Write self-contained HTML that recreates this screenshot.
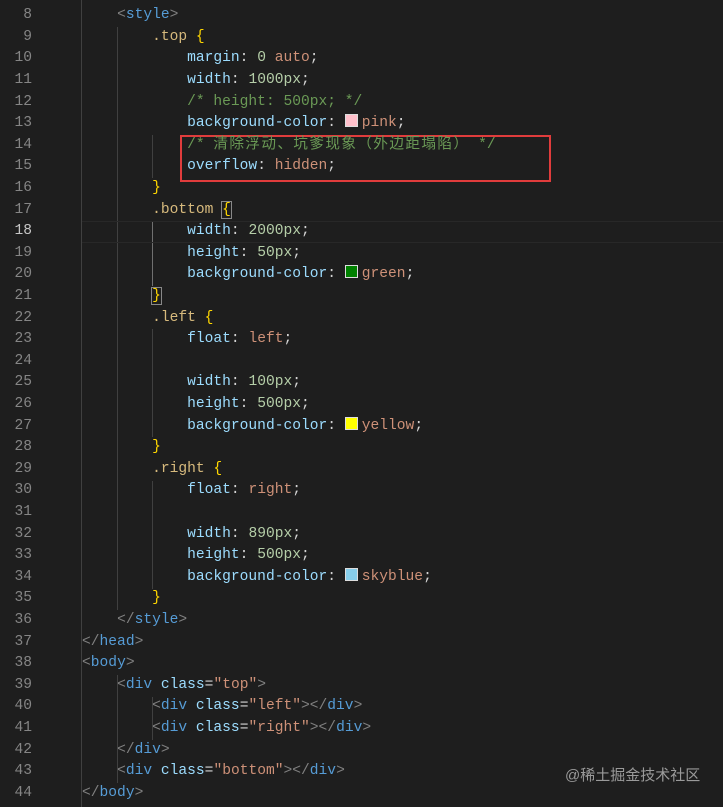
<!DOCTYPE html>
<html><head><meta charset="utf-8"><style>
body{margin:0;width:723px;height:807px;background:#1e1e1e;overflow:hidden;position:relative;font-family:"Liberation Mono","Noto Sans CJK SC",monospace;font-size:14.6px}
.l{position:absolute;left:0;height:21.6px;line-height:21.6px;white-space:pre;width:723px}
.n{position:absolute;width:32px;text-align:right;color:#858585}
.c{position:absolute;left:47px;color:#d4d4d4}
.t{color:#808080}.g{color:#569cd6}.a{color:#9cdcfe}.s{color:#ce9178}.sel{color:#d7ba7d}.b{color:#ffd700}.p{color:#9cdcfe}.num{color:#b5cea8}.cm{color:#6a9955}
.sw{display:inline-block;width:11px;height:11px;border:1px solid #ddd;margin-right:4px;vertical-align:-1px}
.guide{position:absolute;width:1px;background:#404040}
</style></head><body>
<div style="position:absolute;left:81px;top:0;width:1px;height:807px;background:#404040"></div>
<div class="guide" style="left:117px;top:27px;height:583px"></div>
<div class="guide" style="left:152px;top:135px;height:43px"></div>
<div class="guide" style="left:152px;top:221px;height:65px;background:#707070"></div>
<div class="guide" style="left:152px;top:329px;height:108px"></div>
<div class="guide" style="left:152px;top:481px;height:108px"></div>
<div class="guide" style="left:117px;top:675px;height:108px"></div>
<div class="guide" style="left:152px;top:697px;height:43px"></div>
<div style="position:absolute;left:82px;top:221px;width:641px;height:20px;border-top:1px solid #282828;border-bottom:1px solid #282828"></div>
<div style="position:absolute;left:180px;top:135px;width:367px;height:43px;border:2px solid #e03c3c"></div>
<div id="code"></div>
<div style="position:absolute;left:565px;top:764px;color:#9a9a9a;font-family:'Liberation Sans','Noto Sans CJK SC',sans-serif;font-size:15px">@稀土掘金技术社区</div>
<script>
var L=[
['8','        <span class="t">&lt;</span><span class="g">style</span><span class="t">&gt;</span>'],
['9','            <span class="sel">.top</span> <span class="b">{</span>'],
['10','                <span class="p">margin</span>: <span class="num">0</span> <span class="s">auto</span>;'],
['11','                <span class="p">width</span>: <span class="num">1000px</span>;'],
['12','                <span class="cm">/* height: 500px; */</span>'],
['13','                <span class="p">background-color</span>: <span class="sw" style="background:pink"></span><span class="s">pink</span>;'],
['14','                <span class="cm">/* <span style="letter-spacing:1.4px">清除浮动、坑爹现象（外边距塌陷）</span> */</span>'],
['15','                <span class="p">overflow</span>: <span class="s">hidden</span>;'],
['16','            <span class="b">}</span>'],
['17','            <span class="sel">.bottom</span> <span class="b" style="outline:1px solid #888">{</span>'],
['18','                <span class="p">width</span>: <span class="num">2000px</span>;'],
['19','                <span class="p">height</span>: <span class="num">50px</span>;'],
['20','                <span class="p">background-color</span>: <span class="sw" style="background:green"></span><span class="s">green</span>;'],
['21','            <span class="b" style="outline:1px solid #888">}</span>'],
['22','            <span class="sel">.left</span> <span class="b">{</span>'],
['23','                <span class="p">float</span>: <span class="s">left</span>;'],
['24',''],
['25','                <span class="p">width</span>: <span class="num">100px</span>;'],
['26','                <span class="p">height</span>: <span class="num">500px</span>;'],
['27','                <span class="p">background-color</span>: <span class="sw" style="background:yellow"></span><span class="s">yellow</span>;'],
['28','            <span class="b">}</span>'],
['29','            <span class="sel">.right</span> <span class="b">{</span>'],
['30','                <span class="p">float</span>: <span class="s">right</span>;'],
['31',''],
['32','                <span class="p">width</span>: <span class="num">890px</span>;'],
['33','                <span class="p">height</span>: <span class="num">500px</span>;'],
['34','                <span class="p">background-color</span>: <span class="sw" style="background:skyblue"></span><span class="s">skyblue</span>;'],
['35','            <span class="b">}</span>'],
['36','        <span class="t">&lt;/</span><span class="g">style</span><span class="t">&gt;</span>'],
['37','    <span class="t">&lt;/</span><span class="g">head</span><span class="t">&gt;</span>'],
['38','    <span class="t">&lt;</span><span class="g">body</span><span class="t">&gt;</span>'],
['39','        <span class="t">&lt;</span><span class="g">div</span> <span class="a">class</span>=<span class="s">"top"</span><span class="t">&gt;</span>'],
['40','            <span class="t">&lt;</span><span class="g">div</span> <span class="a">class</span>=<span class="s">"left"</span><span class="t">&gt;&lt;/</span><span class="g">div</span><span class="t">&gt;</span>'],
['41','            <span class="t">&lt;</span><span class="g">div</span> <span class="a">class</span>=<span class="s">"right"</span><span class="t">&gt;&lt;/</span><span class="g">div</span><span class="t">&gt;</span>'],
['42','        <span class="t">&lt;/</span><span class="g">div</span><span class="t">&gt;</span>'],
['43','        <span class="t">&lt;</span><span class="g">div</span> <span class="a">class</span>=<span class="s">"bottom"</span><span class="t">&gt;&lt;/</span><span class="g">div</span><span class="t">&gt;</span>'],
['44','    <span class="t">&lt;/</span><span class="g">body</span><span class="t">&gt;</span>']
];
var h='';
for(var i=0;i<L.length;i++){var yy=16+i*21.6-10.8;
h+='<div class="l" style="top:'+yy+'px"><span class="n"'+(L[i][0]=='18'?' style="color:#c6c6c6"':'')+'>'+L[i][0]+'</span><span class="c">'+L[i][1]+'</span></div>';}
document.getElementById('code').innerHTML=h;
</script>
</body></html>
